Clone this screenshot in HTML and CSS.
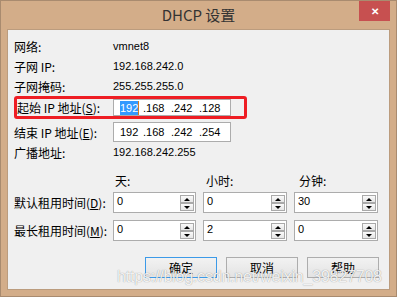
FILE: index.html
```html
<!DOCTYPE html>
<html lang="zh-CN">
<head>
    <meta charset="UTF-8">
    <title>DHCP 设置</title>
    <link rel="stylesheet" href="styles.css">
</head>
<body>
    <div class="window">
        <div class="titlebar">
            <span class="title">DHCP 设置</span>
            <div class="close">&#x2715;</div>
        </div>
        <div class="client">
            <div class="row">
                <span class="label">网络:</span>
                <span class="value">vmnet8</span>
            </div>
            <div class="row">
                <span class="label">子网 IP:</span>
                <span class="value">192.168.242.0</span>
            </div>
            <div class="row">
                <span class="label">子网掩码:</span>
                <span class="value">255.255.255.0</span>
            </div>
            <div class="row highlight">
                <span class="label">起始 IP 地址(<u>S</u>):</span>
                <div class="ipbox">
                    <span class="seg first"><span class="sel">192</span><span class="caret"></span></span>
                    <span class="seg">.168</span>
                    <span class="seg">.242</span>
                    <span class="seg">.128</span>
                </div>
            </div>
            <div class="row iprow">
                <span class="label">结束 IP 地址(<u>E</u>):</span>
                <div class="ipbox">
                    <span class="seg first">192</span>
                    <span class="seg">.168</span>
                    <span class="seg">.242</span>
                    <span class="seg">.254</span>
                </div>
            </div>
            <div class="row">
                <span class="label">广播地址:</span>
                <span class="value">192.168.242.255</span>
            </div>

            <div class="row heads">
                <span class="label"></span>
                <span class="head">天:</span>
                <span class="head">小时:</span>
                <span class="head">分钟:</span>
            </div>
            <div class="row spinrow">
                <span class="label">默认租用时间(<u>D</u>):</span>
                <div class="spin"><span class="num">0</span><div class="arrows"><i class="up"></i><i class="down"></i></div></div>
                <div class="spin"><span class="num">0</span><div class="arrows"><i class="up"></i><i class="down"></i></div></div>
                <div class="spin"><span class="num">30</span><div class="arrows"><i class="up"></i><i class="down"></i></div></div>
            </div>
            <div class="row spinrow second">
                <span class="label">最长租用时间(<u>M</u>):</span>
                <div class="spin"><span class="num">0</span><div class="arrows"><i class="up"></i><i class="down"></i></div></div>
                <div class="spin"><span class="num">2</span><div class="arrows"><i class="up"></i><i class="down"></i></div></div>
                <div class="spin"><span class="num">0</span><div class="arrows"><i class="up"></i><i class="down"></i></div></div>
            </div>

            <div class="buttons">
                <button class="default">确定</button>
                <button>取消</button>
                <button>帮助</button>
            </div>

            <div class="watermark">https://blog.csdn.net/weixin_39827708</div>
        </div>
    </div>
</body>
</html>
```

FILE: styles.css
```css
body {
    margin: 0;
    font-family: "Liberation Sans", "Noto Sans CJK SC", sans-serif;
    font-size: 12px;
    color: #000;
}
.window {
    width: 397px;
    height: 297px;
    box-sizing: border-box;
    background: #d3ad89;
    border: 1px solid #a98b6f;
    display: flex;
    flex-direction: column;
}
.titlebar {
    height: 28px;
    position: relative;
    display: flex;
    align-items: center;
    justify-content: center;
}
.title {
    font-family: "Noto Sans CJK SC", sans-serif;
    font-size: 15px;
    color: #333;
    margin-top: -2px;
}
.close {
    position: absolute;
    top: 0;
    right: 6px;
    width: 31px;
    height: 20px;
    background: #c75050;
    color: #fff;
    font-size: 10px;
    font-weight: bold;
    display: flex;
    align-items: center;
    justify-content: center;
}
.client {
    position: relative;
    margin: 0 6px 0 6px;
    height: 261px;
    box-sizing: border-box;
    background: #f0f0f0;
    border: 1px solid #bb9c7e;
    padding-top: 6px;
    overflow: hidden;
}
.row {
    display: flex;
    align-items: center;
    height: 20px;
    padding-left: 6px;
}
.label {
    width: 99px;
    flex: none;
    font-family: "Noto Sans CJK SC", sans-serif;
    font-size: 12px;
}
.value {
    font-size: 11px;
}
.row.highlight {
    height: 23px;
    box-sizing: border-box;
    width: 233px;
    margin-left: 6px;
    padding-left: 0;
    border: 3px solid #ee1d23;
    border-radius: 3px;
}
.row.highlight .label {
    width: 96px;
}
.row.highlight .ipbox {
    height: 17px;
}
.iprow {
    margin-top: 3px;
}
.ipbox {
    width: 118px;
    height: 20px;
    box-sizing: border-box;
    background: #fff;
    border: 1px solid #acacac;
    display: flex;
    align-items: center;
    padding-left: 6px;
    font-size: 11px;
}
.seg {
    width: 28px;
    flex: none;
}
.seg.first {
    width: 23px;
    display: flex;
    align-items: center;
}
.sel {
    background: #3399ff;
    color: #fff;
    line-height: 14px;
}
.caret {
    width: 1px;
    height: 14px;
    background: #d27b22;
}
.heads {
    height: 16px;
    margin-top: 10px;
}
.head {
    width: 89px;
    flex: none;
    padding-left: 2px;
    font-family: "Noto Sans CJK SC", sans-serif;
}
.head + .head {
    width: 91px;
}
.spinrow {
    height: 21px;
    margin-top: 4px;
}
.spinrow.second {
    margin-top: 7px;
}
.spin {
    width: 84px;
    height: 21px;
    box-sizing: border-box;
    background: #fff;
    border: 1px solid #acacac;
    display: flex;
    justify-content: space-between;
    margin-right: 7px;
    flex: none;
}
.spin:first-of-type {
    width: 83px;
}
.num {
    font-size: 11px;
    padding: 2px 0 0 3px;
}
.arrows {
    display: flex;
    flex-direction: column;
    padding: 2px 1px 0 0;
}
.arrows i {
    width: 14px;
    height: 8px;
    box-sizing: border-box;
    border: 1px solid #a9a9a9;
    background: linear-gradient(#fafafa, #e6e6e6);
    display: flex;
    align-items: center;
    justify-content: center;
}
.arrows i::after {
    content: "";
    border-left: 3px solid transparent;
    border-right: 3px solid transparent;
}
.arrows .up::after {
    border-bottom: 3px solid #000;
}
.arrows .down::after {
    border-top: 3px solid #000;
}
.buttons {
    display: flex;
    justify-content: flex-end;
    gap: 9px;
    padding-right: 10px;
    margin-top: 16px;
}
button {
    width: 72px;
    height: 21px;
    padding: 0;
    border: 1px solid #adadad;
    background: linear-gradient(#f2f2f2, #e3e3e3);
    font-family: "Noto Sans CJK SC", sans-serif;
    font-size: 12px;
    color: #000;
}
button.default {
    border-color: #3c9ae8;
}
/* csdn watermark baked into the screenshot */
.watermark {
    position: absolute;
    left: 109px;
    top: 238px;
    font-family: "Liberation Sans", sans-serif;
    font-size: 16px;
    color: rgba(255, 255, 255, 0.9);
    text-shadow: 0 0 1px rgba(0, 0, 0, 0.45);
    white-space: nowrap;
    letter-spacing: -0.2px;
    pointer-events: none;
}
```
